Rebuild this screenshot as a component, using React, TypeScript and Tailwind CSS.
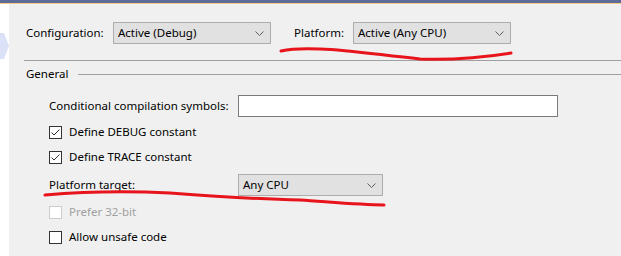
import React from "react";

const font = { fontFamily: '"Noto Sans", "Segoe UI", sans-serif' };

function Chevron() {
    return (
        <svg width="9" height="5" viewBox="0 0 9 5" className="shrink-0">
            <path d="M0.5 0.5 L4.5 4.5 L8.5 0.5" fill="none" stroke="#606060" strokeWidth="1" />
        </svg>
    );
}

function Select({ value, width }: { value: string; width: string }) {
    return (
        <div
            className={`${width} h-[22px] flex items-center justify-between pl-[4px] pr-[6px] bg-[#e1e1e1] border border-[#adadad] text-[#000]`}
        >
            <span>{value}</span>
            <Chevron />
        </div>
    );
}

function Check({ label, checked, disabled }: { label?: string; checked?: boolean; disabled?: boolean }) {
    return (
        <div className="h-[20px] flex items-center gap-[7px]">
            <div
                className={`w-[13px] h-[13px] border bg-white flex items-center justify-center ${
                    disabled ? "border-[#cccccc]" : "border-[#333333]"
                }`}
            >
                {checked && (
                    <svg width="11" height="11" viewBox="0 0 11 11">
                        <path d="M1.5 5.5 L4 8 L9.5 2.5" fill="none" stroke="#333333" strokeWidth="1" />
                    </svg>
                )}
            </div>
            {label && <span className={disabled ? "text-[#a0a0a0]" : "text-black"}>{label}</span>}
        </div>
    );
}

export default function App() {
    return (
        <div className="relative w-[621px] h-[256px] overflow-hidden flex flex-col text-[11.5px]" style={font}>
            <div className="h-[3px] shrink-0 bg-[#5d6b99]" />
            <div className="h-px shrink-0 bg-[#f5cc84]" />

            <div className="flex flex-1 min-h-0">
                {/* left strip */}
                <div className="w-[9px] bg-white shrink-0 pt-[29px]">
                    <svg width="9" height="26" viewBox="0 0 9 26">
                        <polygon points="0,0 4,0 9,13 4,26 0,26" fill="#dbe1f6" />
                    </svg>
                </div>

                {/* page */}
                <div className="flex-1 bg-[#f0f0f0] flex flex-col">
                    <div className="shrink-0 mt-[18px] h-[22px] flex items-center pl-[17px]">
                        <span className="w-[87px]">Configuration:</span>
                        <Select value="Active (Debug)" width="w-[158px]" />
                        <span className="w-[59px] ml-[23px]">Platform:</span>
                        <Select value="Active (Any CPU)" width="w-[158px]" />
                    </div>

                    <div className="shrink-0 mt-[16px] ml-[15px] h-px bg-[#a0a0a0]" />

                    <div className="shrink-0 mt-[6px] h-[14px] flex items-center pl-[17px]">
                        <span>General</span>
                        <div className="flex-1 h-px bg-[#a0a0a0] ml-[10px]" />
                    </div>

                    <div className="shrink-0 pl-[40px] flex flex-col">
                        <div className="mt-[14px] h-[22px] flex items-center">
                            <span className="w-[189px]">Conditional compilation symbols:</span>
                            <div className="w-[320px] h-[22px] bg-white border border-[#7a7a7a]" />
                        </div>
                        <div className="mt-[5px]">
                            <Check label="Define DEBUG constant" checked />
                        </div>
                        <div className="mt-[5px]">
                            <Check label="Define TRACE constant" checked />
                        </div>
                        <div className="mt-[7px] h-[22px] flex items-center">
                            <span className="w-[189px]">Platform target:</span>
                            <Select value="Any CPU" width="w-[145px]" />
                        </div>
                        <div className="mt-[6px]">
                            <Check label="Prefer 32-bit" disabled />
                        </div>
                        <div className="mt-[5px]">
                            <Check label="Allow unsafe code" />
                        </div>
                        <div className="mt-[5px]">
                            <Check />
                        </div>
                    </div>
                </div>
            </div>

            {/* hand-drawn red annotations */}
            <svg className="absolute inset-0 pointer-events-none" width="621" height="256" viewBox="0 0 621 256">
                <path
                    d="M281 51 C290 49 300 48 320 49 C350 50 380 55 420 59 C450 60 480 58 511 53"
                    fill="none"
                    stroke="#e8141b"
                    strokeWidth="3"
                    strokeLinecap="round"
                />
                <path
                    d="M45 195 C80 192 130 191 170 193 C210 196 250 199 300 200 C330 202 360 205 384 205"
                    fill="none"
                    stroke="#e8141b"
                    strokeWidth="3"
                    strokeLinecap="round"
                />
            </svg>
        </div>
    );
}
